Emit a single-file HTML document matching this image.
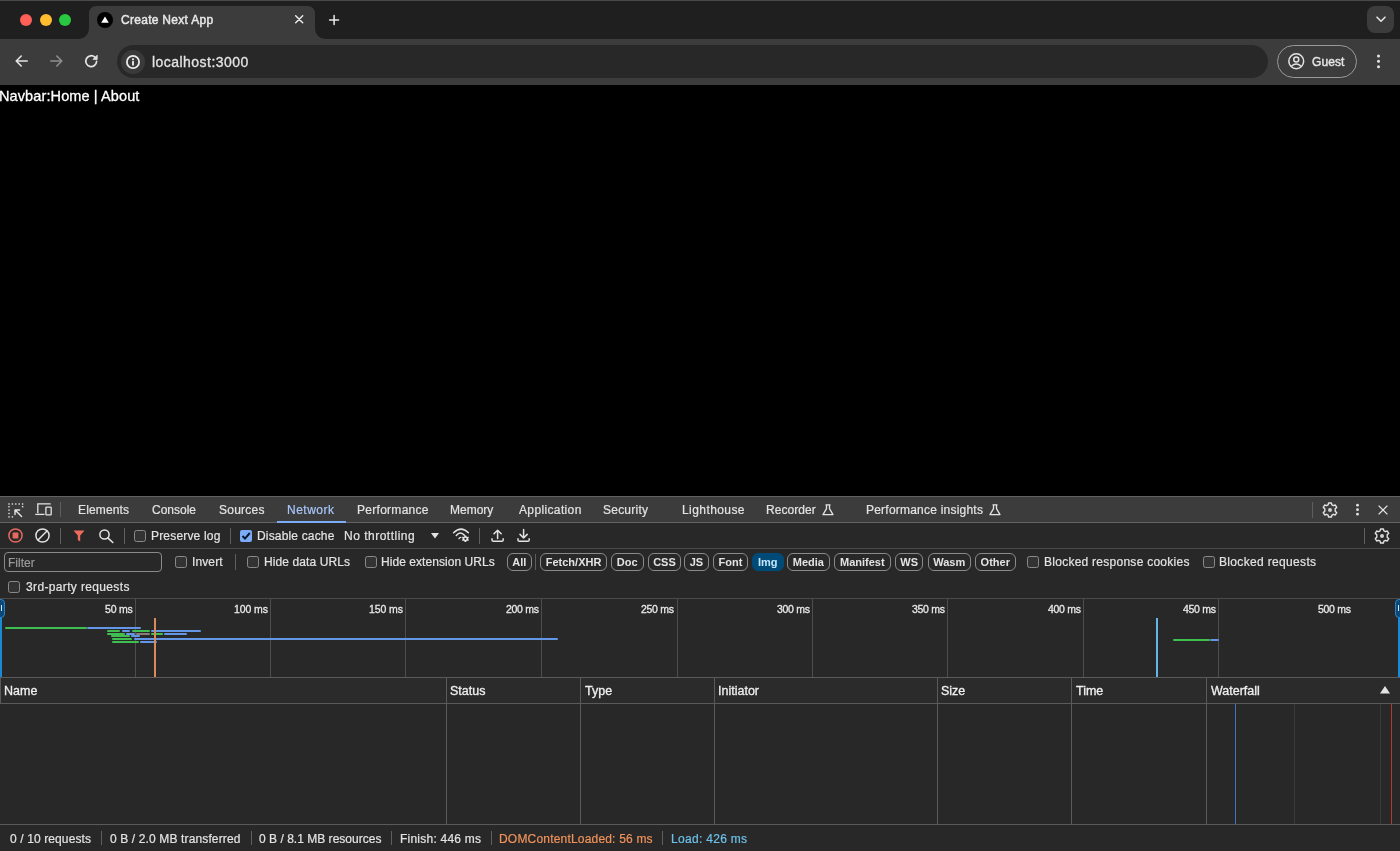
<!DOCTYPE html>
<html><head><meta charset="utf-8">
<style>
*{margin:0;padding:0;box-sizing:border-box}
html,body{width:1400px;height:851px;overflow:hidden;background:#000;font-family:"Liberation Sans",sans-serif;}
.a{position:absolute}
.t{white-space:nowrap;will-change:transform}
svg{overflow:visible}
</style></head><body>
<div class="a" style="left:0px;top:0px;width:1400px;height:39px;background:#1f1f1f"></div>
<div class="a" style="left:0px;top:0px;width:1400px;height:1px;background:#4a4a4a"></div>
<svg class="a" style="left:77px;top:5px" width="250" height="35" viewBox="0 0 250 35"><path d="M0 34 Q12 34 12 22 L12 9 Q12 1 20 1 L230 1 Q238 1 238 9 L238 22 Q238 34 250 34 Z" fill="#3c3c3c"/></svg>
<div class="a" style="left:0px;top:39px;width:1400px;height:46px;background:#3c3c3c"></div>
<div class="a" style="left:117px;top:45px;width:1151px;height:33px;background:#282828;border-radius:16.5px"></div>
<div class="a" style="left:19.8px;top:13.8px;width:12.4px;height:12.4px;background:#fe5f57;border-radius:50%"></div>
<div class="a" style="left:39.5px;top:13.8px;width:12.4px;height:12.4px;background:#febc2e;border-radius:50%"></div>
<div class="a" style="left:59.0px;top:13.8px;width:12.4px;height:12.4px;background:#28c840;border-radius:50%"></div>
<div class="a" style="left:97px;top:11.5px;width:16px;height:16px;background:#000;border-radius:50%"></div>
<svg class="a" style="left:97px;top:11.5px;" width="16" height="16" viewBox="0 0 16 16"><path d="M8 4.6 L11.8 10.8 L4.2 10.8 Z" fill="#fff"/></svg>
<div class="a t" id="t0" style="top:13.54px;font-size:12px;line-height:12px;color:#e8e8e8;font-weight:normal;letter-spacing:0.286px;-webkit-text-stroke:0.45px #e8e8e8;left:121.0px;">Create Next App</div>
<svg class="a" style="left:295.3px;top:15.3px;" width="8.4" height="8.4" viewBox="0 0 8.4 8.4"><path d="M0.7 0.7 L7.7 7.7 M7.7 0.7 L0.7 7.7" stroke="#ececec" stroke-width="1.5" stroke-linecap="round"/></svg>
<svg class="a" style="left:329.2px;top:14.6px;" width="10.2" height="10.2" viewBox="0 0 10.2 10.2"><path d="M5.1 0.6 V9.6 M0.6 5.1 H9.6" stroke="#ececec" stroke-width="1.5" stroke-linecap="round"/></svg>
<div class="a" style="left:1367px;top:6px;width:27px;height:27px;background:#3c3c3c;border-radius:8px"></div>
<svg class="a" style="left:1375.8px;top:16.2px;" width="10" height="7" viewBox="0 0 10 7"><path d="M1 1.2 L5 5.2 L9 1.2" stroke="#e3e3e3" stroke-width="1.6" fill="none" stroke-linecap="round" stroke-linejoin="round"/></svg>
<svg class="a" style="left:15.4px;top:55.4px;" width="13" height="12" viewBox="0 0 13 12"><path d="M12.2 6 H1.2 M6.2 1 L1.2 6 L6.2 11" stroke="#e3e3e3" stroke-width="1.6" fill="none" stroke-linecap="round" stroke-linejoin="round"/></svg>
<svg class="a" style="left:50.2px;top:55.4px;" width="13" height="12" viewBox="0 0 13 12"><path d="M0.8 6 H11.8 M6.8 1 L11.8 6 L6.8 11" stroke="#8f8f8f" stroke-width="1.6" fill="none" stroke-linecap="round" stroke-linejoin="round"/></svg>
<svg class="a" style="left:84px;top:53.6px;" width="15" height="14" viewBox="0 0 15 14"><path d="M12.6 7.3 A5.4 5.4 0 1 1 10.9 3.2" stroke="#e3e3e3" stroke-width="1.7" fill="none" stroke-linecap="round"/><path d="M13.2 1.2 L13.2 5.4 L9 5.4 Z" fill="#e3e3e3" stroke="#e3e3e3" stroke-width="0.8" stroke-linejoin="round"/></svg>
<div class="a" style="left:121px;top:50px;width:23.5px;height:23.5px;background:#3a3a3a;border-radius:50%"></div>
<svg class="a" style="left:125.8px;top:54.8px;" width="14" height="14" viewBox="0 0 14 14"><circle cx="7" cy="7" r="6.1" stroke="#ececec" stroke-width="1.8" fill="none"/><circle cx="7" cy="4.3" r="1.1" fill="#ececec"/><rect x="6.05" y="6.1" width="1.9" height="4.4" fill="#ececec"/></svg>
<div class="a t" id="t1" style="top:54.75px;font-size:14px;line-height:14px;color:#e3e3e3;font-weight:normal;letter-spacing:0.462px;-webkit-text-stroke:0.3px #e3e3e3;left:152.0px;">localhost:3000</div>
<div class="a" style="left:1276.5px;top:45px;width:80.5px;height:33px;border:1.3px solid #9a9a9a;border-radius:16.5px"></div>
<svg class="a" style="left:1287.5px;top:53.2px;" width="16.5" height="16.5" viewBox="0 0 16.5 16.5"><circle cx="8.25" cy="8.25" r="7.4" stroke="#e3e3e3" stroke-width="1.5" fill="none"/><circle cx="8.25" cy="6.4" r="2.5" stroke="#e3e3e3" stroke-width="1.5" fill="none"/><path d="M3.4 13.2 Q8.25 8.8 13.1 13.2" stroke="#e3e3e3" stroke-width="1.5" fill="none"/></svg>
<div class="a t" id="t2" style="top:55.84px;font-size:12px;line-height:12px;color:#e6e6e6;font-weight:normal;letter-spacing:0.075px;-webkit-text-stroke:0.4px #e6e6e6;left:1311.5px;">Guest</div>
<svg class="a" style="left:1376px;top:53px;" width="5" height="16" viewBox="0 0 5 16"><circle cx="2.5" cy="3" r="1.5" fill="#e6e6e6"/><circle cx="2.5" cy="8.3" r="1.5" fill="#e6e6e6"/><circle cx="2.5" cy="13.8" r="1.5" fill="#e6e6e6"/></svg>
<div class="a" style="left:0px;top:85px;width:1400px;height:411px;background:#000"></div>
<div class="a t" id="t3" style="top:89.13px;font-size:14.5px;line-height:14.5px;color:#ffffff;font-weight:normal;letter-spacing:0.111px;-webkit-text-stroke:0.3px #ffffff;left:-1.0px;">Navbar:Home | About</div>
<div class="a" style="left:0px;top:496px;width:1400px;height:355px;background:#282828"></div>
<div class="a" style="left:0px;top:496px;width:1400px;height:1px;background:#626262"></div>
<div class="a" style="left:0px;top:497px;width:1400px;height:25px;background:#3c3c3c"></div>
<div class="a" style="left:0px;top:522px;width:1400px;height:1px;background:#626262"></div>
<div class="a" style="left:0px;top:548px;width:1400px;height:1px;background:#4a4a4a"></div>
<svg class="a" style="left:8.3px;top:502.6px;" width="16" height="15" viewBox="0 0 16 15"><rect x="0.30000000000000004" y="0.3" width="1.4" height="1.4" fill="#e3e3e3"/><rect x="3.7" y="0.3" width="1.4" height="1.4" fill="#e3e3e3"/><rect x="7.1" y="0.3" width="1.4" height="1.4" fill="#e3e3e3"/><rect x="10.5" y="0.3" width="1.4" height="1.4" fill="#e3e3e3"/><rect x="13.9" y="0.3" width="1.4" height="1.4" fill="#e3e3e3"/><rect x="0.3" y="3.0" width="1.4" height="1.4" fill="#e3e3e3"/><rect x="0.3" y="6.3999999999999995" width="1.4" height="1.4" fill="#e3e3e3"/><rect x="0.3" y="9.8" width="1.4" height="1.4" fill="#e3e3e3"/><rect x="0.3" y="13.200000000000001" width="1.4" height="1.4" fill="#e3e3e3"/><rect x="3.7" y="13.2" width="1.4" height="1.4" fill="#e3e3e3"/><rect x="13.9" y="3" width="1.4" height="1.4" fill="#e3e3e3"/><path d="M7 7 L13.6 13.6 M7 7 H11.6 M7 7 V11.6" stroke="#e3e3e3" stroke-width="1.4" fill="none" stroke-linecap="round"/></svg>
<svg class="a" style="left:34.5px;top:503.3px;" width="17" height="13" viewBox="0 0 17 13"><path d="M2.8 10.2 V0.8 H15.7" stroke="#e3e3e3" stroke-width="1.3" fill="none"/><path d="M0.3 11.4 H9.5" stroke="#e3e3e3" stroke-width="1.3"/><rect x="10.9" y="4.2" width="5.3" height="7.6" rx="0.6" stroke="#e3e3e3" stroke-width="1.3" fill="none"/></svg>
<div class="a" style="left:60px;top:502px;width:1px;height:15px;background:#5e5e5e"></div>
<div class="a t" id="t4" style="top:503.64px;font-size:12px;line-height:12px;color:#e3e3e3;font-weight:normal;letter-spacing:0.143px;-webkit-text-stroke:0.2px #e3e3e3;left:77.99999999999997px;">Elements</div>
<div class="a t" id="t5" style="top:503.64px;font-size:12px;line-height:12px;color:#e3e3e3;font-weight:normal;-webkit-text-stroke:0.2px #e3e3e3;left:152.0px;">Console</div>
<div class="a t" id="t6" style="top:503.64px;font-size:12px;line-height:12px;color:#e3e3e3;font-weight:normal;letter-spacing:0.233px;-webkit-text-stroke:0.2px #e3e3e3;left:219.0px;">Sources</div>
<div class="a t" id="t7" style="top:503.64px;font-size:12px;line-height:12px;color:#a8c7fa;font-weight:normal;letter-spacing:0.500px;-webkit-text-stroke:0.2px #a8c7fa;left:287.0px;">Network</div>
<div class="a t" id="t8" style="top:503.64px;font-size:12px;line-height:12px;color:#e3e3e3;font-weight:normal;letter-spacing:0.280px;-webkit-text-stroke:0.2px #e3e3e3;left:357.0000000000001px;">Performance</div>
<div class="a t" id="t9" style="top:503.64px;font-size:12px;line-height:12px;color:#e3e3e3;font-weight:normal;-webkit-text-stroke:0.2px #e3e3e3;left:450.0px;">Memory</div>
<div class="a t" id="t10" style="top:503.64px;font-size:12px;line-height:12px;color:#e3e3e3;font-weight:normal;letter-spacing:0.360px;-webkit-text-stroke:0.2px #e3e3e3;left:519.0px;">Application</div>
<div class="a t" id="t11" style="top:503.64px;font-size:12px;line-height:12px;color:#e3e3e3;font-weight:normal;letter-spacing:0.228px;-webkit-text-stroke:0.2px #e3e3e3;left:603.0000000000001px;">Security</div>
<div class="a t" id="t12" style="top:503.64px;font-size:12px;line-height:12px;color:#e3e3e3;font-weight:normal;letter-spacing:0.422px;-webkit-text-stroke:0.2px #e3e3e3;left:681.9999999999998px;">Lighthouse</div>
<div class="a t" id="t13" style="top:503.64px;font-size:12px;line-height:12px;color:#e3e3e3;font-weight:normal;letter-spacing:0.056px;-webkit-text-stroke:0.2px #e3e3e3;left:765.4999999999999px;">Recorder</div>
<div class="a t" id="t14" style="top:503.64px;font-size:12px;line-height:12px;color:#e3e3e3;font-weight:normal;letter-spacing:0.220px;-webkit-text-stroke:0.2px #e3e3e3;left:866.0px;">Performance insights</div>
<div class="a" style="left:277px;top:521px;width:69px;height:2px;background:#7cacf8"></div>
<svg class="a" style="left:821.5px;top:504px;" width="12" height="12" viewBox="0 0 12 12"><path d="M3.5 0.8 H8.5 M4.5 0.8 V4.6 L1 10.6 H11 L7.5 4.6 V0.8" stroke="#e3e3e3" stroke-width="1.3" fill="none" stroke-linejoin="round"/></svg>
<svg class="a" style="left:988.5px;top:504px;" width="12" height="12" viewBox="0 0 12 12"><path d="M3.5 0.8 H8.5 M4.5 0.8 V4.6 L1 10.6 H11 L7.5 4.6 V0.8" stroke="#e3e3e3" stroke-width="1.3" fill="none" stroke-linejoin="round"/></svg>
<div class="a" style="left:1311.5px;top:502px;width:1px;height:16px;background:#5e5e5e"></div>
<svg class="a" style="left:1322px;top:501.5px;" width="16" height="16" viewBox="0 0 16 16"><g transform="translate(8,8)"><path d="M-1.4 -7 L1.4 -7 L1.9 -5.1 L3.4 -4.3 L5.3 -5 L6.7 -2.6 L5.2 -1.3 L5.2 1.3 L6.7 2.6 L5.3 5 L3.4 4.3 L1.9 5.1 L1.4 7 L-1.4 7 L-1.9 5.1 L-3.4 4.3 L-5.3 5 L-6.7 2.6 L-5.2 1.3 L-5.2 -1.3 L-6.7 -2.6 L-5.3 -5 L-3.4 -4.3 L-1.9 -5.1 Z" stroke="#e3e3e3" stroke-width="1.4" fill="none" stroke-linejoin="round"/><circle r="2" fill="#cfcfcf"/></g></svg>
<svg class="a" style="left:1354.7px;top:502px;" width="5" height="15" viewBox="0 0 5 15"><circle cx="2.5" cy="3.2" r="1.4" fill="#e3e3e3"/><circle cx="2.5" cy="7.7" r="1.4" fill="#e3e3e3"/><circle cx="2.5" cy="12.2" r="1.4" fill="#e3e3e3"/></svg>
<svg class="a" style="left:1377.5px;top:504.8px;" width="10" height="10" viewBox="0 0 10 10"><path d="M0.6 0.6 L9.4 9.4 M9.4 0.6 L0.6 9.4" stroke="#e3e3e3" stroke-width="1.3"/></svg>
<svg class="a" style="left:8px;top:527.8px;" width="15" height="15" viewBox="0 0 15 15"><circle cx="7.5" cy="7.5" r="6.6" stroke="#e46a5e" stroke-width="1.5" fill="none"/><rect x="4.6" y="4.6" width="5.8" height="5.8" rx="0.6" fill="#e46a5e"/></svg>
<svg class="a" style="left:35.2px;top:527.8px;" width="15" height="15" viewBox="0 0 15 15"><circle cx="7.5" cy="7.5" r="6.6" stroke="#e3e3e3" stroke-width="1.5" fill="none"/><path d="M12.2 2.8 L2.8 12.2" stroke="#e3e3e3" stroke-width="1.5"/></svg>
<div class="a" style="left:60px;top:528px;width:1px;height:16px;background:#5e5e5e"></div>
<svg class="a" style="left:72.5px;top:530px;" width="12" height="12" viewBox="0 0 12 12"><path d="M0.5 0.5 H11.5 L7.2 5.5 V11.5 L4.8 10 V5.5 Z" fill="#ee6b5e"/></svg>
<svg class="a" style="left:98.5px;top:528.8px;" width="15" height="14" viewBox="0 0 15 14"><circle cx="5.5" cy="5.5" r="4.6" stroke="#e3e3e3" stroke-width="1.5" fill="none"/><path d="M8.8 8.8 L13.8 13.5" stroke="#e3e3e3" stroke-width="1.6" stroke-linecap="round"/></svg>
<div class="a" style="left:123.5px;top:528px;width:1px;height:16px;background:#5e5e5e"></div>
<div class="a" style="left:134px;top:530px;width:12px;height:12px;border:1px solid #8a8a8a;border-radius:2.5px;background:#333"></div>
<div class="a t" id="t15" style="top:530.14px;font-size:12px;line-height:12px;color:#e3e3e3;font-weight:normal;letter-spacing:0.182px;-webkit-text-stroke:0.2px #e3e3e3;left:151.0px;">Preserve log</div>
<div class="a" style="left:229.5px;top:528px;width:1px;height:16px;background:#5e5e5e"></div>
<div class="a" style="left:240px;top:530px;width:12px;height:12px;background:#7cacf8;border-radius:2px"></div>
<svg class="a" style="left:240px;top:530px;" width="12" height="12" viewBox="0 0 12 12"><path d="M2.5 6 L5 8.6 L9.8 3" stroke="#0a1830" stroke-width="2" fill="none"/></svg>
<div class="a t" id="t16" style="top:530.14px;font-size:12px;line-height:12px;color:#e3e3e3;font-weight:normal;letter-spacing:0.167px;-webkit-text-stroke:0.2px #e3e3e3;left:256.5px;">Disable cache</div>
<div class="a t" id="t17" style="top:530.14px;font-size:12px;line-height:12px;color:#e3e3e3;font-weight:normal;letter-spacing:0.500px;-webkit-text-stroke:0.2px #e3e3e3;left:344.0px;">No throttling</div>
<svg class="a" style="left:430.5px;top:533px;" width="8" height="6" viewBox="0 0 8 6"><path d="M0 0 H8 L4 5.5 Z" fill="#e3e3e3"/></svg>
<svg class="a" style="left:452px;top:528px;" width="18" height="14" viewBox="0 0 18 14"><path d="M1.6 4.7 Q9 -2.5 16.4 4.7" stroke="#e3e3e3" stroke-width="1.5" fill="none" stroke-linecap="round"/><path d="M4.3 7.5 Q8.3 2.5 12.4 7.2" stroke="#e3e3e3" stroke-width="1.5" fill="none" stroke-linecap="round"/><path d="M7 10.6 Q7.6 9.6 8.8 9.4" stroke="#e3e3e3" stroke-width="1.4" fill="none" stroke-linecap="round"/><g transform="translate(13.4,10.8)"><path d="M-0.8 -3.2 H0.8 L1.1 -2.3 L2 -1.9 L2.8 -2.3 L3.5 -0.9 L2.7 -0.4 V0.4 L3.5 0.9 L2.8 2.3 L2 1.9 L1.1 2.3 L0.8 3.2 H-0.8 L-1.1 2.3 L-2 1.9 L-2.8 2.3 L-3.5 0.9 L-2.7 0.4 V-0.4 L-3.5 -0.9 L-2.8 -2.3 L-2 -1.9 L-1.1 -2.3 Z" fill="#e3e3e3"/><circle r="1.1" fill="#282828"/></g></svg>
<div class="a" style="left:478.5px;top:528px;width:1px;height:16px;background:#5e5e5e"></div>
<svg class="a" style="left:490.5px;top:528.5px;" width="13.2" height="13.5" viewBox="0 0 13.2 13.5"><path d="M6.6 1.2 V9.6 M3 4.8 L6.6 1.2 L10.2 4.8" stroke="#e3e3e3" stroke-width="1.5" fill="none" stroke-linejoin="round" stroke-linecap="round"/><path d="M1 9.2 V10.9 Q1 12.3 2.4 12.3 H10.8 Q12.2 12.3 12.2 10.9 V9.2" stroke="#e3e3e3" stroke-width="1.5" fill="none"/></svg>
<svg class="a" style="left:517.3px;top:528.5px;" width="13.2" height="13.5" viewBox="0 0 13.2 13.5"><path d="M6.6 0.6 V9 M3 5.4 L6.6 9 L10.2 5.4" stroke="#e3e3e3" stroke-width="1.5" fill="none" stroke-linejoin="round" stroke-linecap="round"/><path d="M1 9.2 V10.9 Q1 12.3 2.4 12.3 H10.8 Q12.2 12.3 12.2 10.9 V9.2" stroke="#e3e3e3" stroke-width="1.5" fill="none"/></svg>
<div class="a" style="left:1364px;top:528px;width:1px;height:16px;background:#5e5e5e"></div>
<svg class="a" style="left:1374.3px;top:527.5px;" width="16" height="16" viewBox="0 0 16 16"><g transform="translate(8,8)"><path d="M-1.4 -7 L1.4 -7 L1.9 -5.1 L3.4 -4.3 L5.3 -5 L6.7 -2.6 L5.2 -1.3 L5.2 1.3 L6.7 2.6 L5.3 5 L3.4 4.3 L1.9 5.1 L1.4 7 L-1.4 7 L-1.9 5.1 L-3.4 4.3 L-5.3 5 L-6.7 2.6 L-5.2 1.3 L-5.2 -1.3 L-6.7 -2.6 L-5.3 -5 L-3.4 -4.3 L-1.9 -5.1 Z" stroke="#e3e3e3" stroke-width="1.4" fill="none" stroke-linejoin="round"/><circle r="2" fill="#cfcfcf"/></g></svg>
<div class="a" style="left:4px;top:552px;width:158px;height:20px;border:1px solid #8a8a8a;border-radius:4px;background:#282828"></div>
<div class="a t" id="t18" style="top:557.04px;font-size:12px;line-height:12px;color:#999999;font-weight:normal;-webkit-text-stroke:0.2px #999999;left:7.5px;">Filter</div>
<div class="a" style="left:175px;top:556px;width:12px;height:12px;border:1px solid #8a8a8a;border-radius:2.5px;background:#333"></div>
<div class="a t" id="t19" style="top:556.24px;font-size:12px;line-height:12px;color:#e3e3e3;font-weight:normal;letter-spacing:0.120px;-webkit-text-stroke:0.2px #e3e3e3;left:191.99999999999997px;">Invert</div>
<div class="a" style="left:235px;top:554px;width:1px;height:16px;background:#5e5e5e"></div>
<div class="a" style="left:246.8px;top:556px;width:12px;height:12px;border:1px solid #8a8a8a;border-radius:2.5px;background:#333"></div>
<div class="a t" id="t20" style="top:556.24px;font-size:12px;line-height:12px;color:#e3e3e3;font-weight:normal;letter-spacing:0.107px;-webkit-text-stroke:0.2px #e3e3e3;left:264.0px;">Hide data URLs</div>
<div class="a" style="left:364.6px;top:556px;width:12px;height:12px;border:1px solid #8a8a8a;border-radius:2.5px;background:#333"></div>
<div class="a t" id="t21" style="top:556.24px;font-size:12px;line-height:12px;color:#e3e3e3;font-weight:normal;letter-spacing:0.056px;-webkit-text-stroke:0.2px #e3e3e3;left:381.0px;">Hide extension URLs</div>
<div class="a t" style="left:506.5px;top:553px;width:24.5px;height:18px;border:1px solid #8a8a8a;color:#e3e3e3;border-radius:6px;font-size:11px;font-weight:bold;line-height:16px;text-align:center">All</div>
<div class="a t" style="left:540px;top:553px;width:67.1px;height:18px;border:1px solid #8a8a8a;color:#e3e3e3;border-radius:6px;font-size:11px;font-weight:bold;line-height:16px;text-align:center">Fetch/XHR</div>
<div class="a t" style="left:611px;top:553px;width:32.5px;height:18px;border:1px solid #8a8a8a;color:#e3e3e3;border-radius:6px;font-size:11px;font-weight:bold;line-height:16px;text-align:center">Doc</div>
<div class="a t" style="left:647.6px;top:553px;width:32.9px;height:18px;border:1px solid #8a8a8a;color:#e3e3e3;border-radius:6px;font-size:11px;font-weight:bold;line-height:16px;text-align:center">CSS</div>
<div class="a t" style="left:684.2px;top:553px;width:24.8px;height:18px;border:1px solid #8a8a8a;color:#e3e3e3;border-radius:6px;font-size:11px;font-weight:bold;line-height:16px;text-align:center">JS</div>
<div class="a t" style="left:713px;top:553px;width:34.9px;height:18px;border:1px solid #8a8a8a;color:#e3e3e3;border-radius:6px;font-size:11px;font-weight:bold;line-height:16px;text-align:center">Font</div>
<div class="a t" style="left:752px;top:553px;width:31.5px;height:18px;background:#004a77;border:1px solid #004a77;color:#c2e7ff;border-radius:6px;font-size:11px;font-weight:bold;line-height:16px;text-align:center">Img</div>
<div class="a t" style="left:787.2px;top:553px;width:42.8px;height:18px;border:1px solid #8a8a8a;color:#e3e3e3;border-radius:6px;font-size:11px;font-weight:bold;line-height:16px;text-align:center">Media</div>
<div class="a t" style="left:834.2px;top:553px;width:56.6px;height:18px;border:1px solid #8a8a8a;color:#e3e3e3;border-radius:6px;font-size:11px;font-weight:bold;line-height:16px;text-align:center">Manifest</div>
<div class="a t" style="left:895.3px;top:553px;width:28.4px;height:18px;border:1px solid #8a8a8a;color:#e3e3e3;border-radius:6px;font-size:11px;font-weight:bold;line-height:16px;text-align:center">WS</div>
<div class="a t" style="left:928px;top:553px;width:42.5px;height:18px;border:1px solid #8a8a8a;color:#e3e3e3;border-radius:6px;font-size:11px;font-weight:bold;line-height:16px;text-align:center">Wasm</div>
<div class="a t" style="left:975px;top:553px;width:40.5px;height:18px;border:1px solid #8a8a8a;color:#e3e3e3;border-radius:6px;font-size:11px;font-weight:bold;line-height:16px;text-align:center">Other</div>
<div class="a" style="left:535.3px;top:554px;width:1px;height:16px;background:#5e5e5e"></div>
<div class="a" style="left:1027px;top:556px;width:12px;height:12px;border:1px solid #8a8a8a;border-radius:2.5px;background:#333"></div>
<div class="a t" id="t22" style="top:556.24px;font-size:12px;line-height:12px;color:#e3e3e3;font-weight:normal;letter-spacing:0.261px;-webkit-text-stroke:0.2px #e3e3e3;left:1044.0px;">Blocked response cookies</div>
<div class="a" style="left:1202.5px;top:556px;width:12px;height:12px;border:1px solid #8a8a8a;border-radius:2.5px;background:#333"></div>
<div class="a t" id="t23" style="top:556.24px;font-size:12px;line-height:12px;color:#e3e3e3;font-weight:normal;letter-spacing:0.333px;-webkit-text-stroke:0.2px #e3e3e3;left:1219.0px;">Blocked requests</div>
<div class="a" style="left:8px;top:580.5px;width:12px;height:12px;border:1px solid #8a8a8a;border-radius:2.5px;background:#333"></div>
<div class="a t" id="t24" style="top:580.54px;font-size:12px;line-height:12px;color:#e3e3e3;font-weight:normal;letter-spacing:0.353px;-webkit-text-stroke:0.2px #e3e3e3;left:26.0px;">3rd-party requests</div>
<div class="a" style="left:0px;top:598px;width:1400px;height:1px;background:#4a4a4a"></div>
<div class="a" style="left:135px;top:599px;width:1px;height:78px;background:#4d4d4d"></div>
<div class="a" style="left:270px;top:599px;width:1px;height:78px;background:#4d4d4d"></div>
<div class="a" style="left:405px;top:599px;width:1px;height:78px;background:#4d4d4d"></div>
<div class="a" style="left:541px;top:599px;width:1px;height:78px;background:#4d4d4d"></div>
<div class="a" style="left:676.5px;top:599px;width:1px;height:78px;background:#4d4d4d"></div>
<div class="a" style="left:812px;top:599px;width:1px;height:78px;background:#4d4d4d"></div>
<div class="a" style="left:947px;top:599px;width:1px;height:78px;background:#4d4d4d"></div>
<div class="a" style="left:1083px;top:599px;width:1px;height:78px;background:#4d4d4d"></div>
<div class="a" style="left:1218px;top:599px;width:1px;height:78px;background:#4d4d4d"></div>
<div class="a t" id="t25" style="top:603.81px;font-size:10.5px;line-height:10.5px;color:#e8e8e8;font-weight:normal;letter-spacing:-0.200px;-webkit-text-stroke:0.3px #e8e8e8;right:1267.5px;">50 ms</div>
<div class="a t" id="t26" style="top:603.81px;font-size:10.5px;line-height:10.5px;color:#e8e8e8;font-weight:normal;letter-spacing:-0.080px;-webkit-text-stroke:0.3px #e8e8e8;right:1132.5px;">100 ms</div>
<div class="a t" id="t27" style="top:603.81px;font-size:10.5px;line-height:10.5px;color:#e8e8e8;font-weight:normal;letter-spacing:-0.080px;-webkit-text-stroke:0.3px #e8e8e8;right:997.5px;">150 ms</div>
<div class="a t" id="t28" style="top:603.81px;font-size:10.5px;line-height:10.5px;color:#e8e8e8;font-weight:normal;letter-spacing:-0.280px;-webkit-text-stroke:0.3px #e8e8e8;right:861.5px;">200 ms</div>
<div class="a t" id="t29" style="top:603.81px;font-size:10.5px;line-height:10.5px;color:#e8e8e8;font-weight:normal;letter-spacing:-0.280px;-webkit-text-stroke:0.3px #e8e8e8;right:726.0px;">250 ms</div>
<div class="a t" id="t30" style="top:603.81px;font-size:10.5px;line-height:10.5px;color:#e8e8e8;font-weight:normal;letter-spacing:-0.280px;-webkit-text-stroke:0.3px #e8e8e8;right:590.5px;">300 ms</div>
<div class="a t" id="t31" style="top:603.81px;font-size:10.5px;line-height:10.5px;color:#e8e8e8;font-weight:normal;letter-spacing:-0.280px;-webkit-text-stroke:0.3px #e8e8e8;right:455.5px;">350 ms</div>
<div class="a t" id="t32" style="top:603.81px;font-size:10.5px;line-height:10.5px;color:#e8e8e8;font-weight:normal;letter-spacing:-0.280px;-webkit-text-stroke:0.3px #e8e8e8;right:319.5px;">400 ms</div>
<div class="a t" id="t33" style="top:603.81px;font-size:10.5px;line-height:10.5px;color:#e8e8e8;font-weight:normal;letter-spacing:-0.280px;-webkit-text-stroke:0.3px #e8e8e8;right:184.5px;">450 ms</div>
<div class="a t" id="t34" style="top:603.81px;font-size:10.5px;line-height:10.5px;color:#e8e8e8;font-weight:normal;letter-spacing:-0.280px;-webkit-text-stroke:0.3px #e8e8e8;right:49.0px;">500 ms</div>
<div class="a" style="left:0px;top:617px;width:2.2px;height:60px;background:#1a8ad4"></div>
<div class="a" style="left:-2px;top:599px;width:6.5px;height:18.5px;background:#0b4a78;border:1px solid #2f7fc0;border-radius:0 4px 4px 0"></div>
<div class="a" style="left:1.2px;top:605px;width:1.2px;height:6px;background:#cfe6ff"></div>
<div class="a" style="left:1397.6px;top:617px;width:2.4px;height:60px;background:#1a8ad4"></div>
<div class="a" style="left:1394.5px;top:599px;width:7.5px;height:18.5px;background:#0b4a78;border:1px solid #2f7fc0;border-radius:4px 0 0 4px"></div>
<div class="a" style="left:1397.8px;top:605px;width:1.2px;height:6px;background:#cfe6ff"></div>
<div class="a" style="left:4.5px;top:627px;width:82.0px;height:2px;background:#3fbf50;border-radius:1px"></div>
<div class="a" style="left:87px;top:627px;width:54.30000000000001px;height:2px;background:#6396e6;border-radius:1px"></div>
<div class="a" style="left:107px;top:630px;width:13.400000000000006px;height:2px;background:#3fbf50;border-radius:1px"></div>
<div class="a" style="left:121.9px;top:630px;width:8.099999999999994px;height:2px;background:#6396e6;border-radius:1px"></div>
<div class="a" style="left:131.6px;top:630px;width:18.400000000000006px;height:2px;background:#3fbf50;border-radius:1px"></div>
<div class="a" style="left:151px;top:630px;width:50px;height:2px;background:#6396e6;border-radius:1px"></div>
<div class="a" style="left:107px;top:633px;width:18px;height:2px;background:#3fbf50;border-radius:1px"></div>
<div class="a" style="left:126px;top:633px;width:9px;height:2px;background:#6396e6;border-radius:1px"></div>
<div class="a" style="left:136px;top:633px;width:14px;height:2px;background:#8a7d74;border-radius:1px"></div>
<div class="a" style="left:151px;top:633px;width:12px;height:2px;background:#3fbf50;border-radius:1px"></div>
<div class="a" style="left:164px;top:633px;width:23px;height:2px;background:#6396e6;border-radius:1px"></div>
<div class="a" style="left:110.6px;top:635px;width:19.400000000000006px;height:2px;background:#3fbf50;border-radius:1px"></div>
<div class="a" style="left:131px;top:635px;width:9px;height:2px;background:#6396e6;border-radius:1px"></div>
<div class="a" style="left:112px;top:638px;width:20px;height:2px;background:#3fbf50;border-radius:1px"></div>
<div class="a" style="left:134px;top:638px;width:424px;height:2px;background:#6396e6;border-radius:1px"></div>
<div class="a" style="left:112px;top:641px;width:27px;height:2px;background:#3fbf50;border-radius:1px"></div>
<div class="a" style="left:140px;top:641px;width:17px;height:2px;background:#6396e6;border-radius:1px"></div>
<div class="a" style="left:154.3px;top:618px;width:1.8px;height:59px;background:#d98a58"></div>
<div class="a" style="left:1156.2px;top:618px;width:1.5px;height:59px;background:#62b6e8"></div>
<div class="a" style="left:1172.5px;top:639px;width:37.5px;height:2px;background:#3fbf50;border-radius:1px"></div>
<div class="a" style="left:1210px;top:639px;width:9px;height:2px;background:#6396e6;border-radius:1px"></div>
<div class="a" style="left:0px;top:677px;width:1400px;height:1px;background:#5a5a5a"></div>
<div class="a" style="left:0px;top:678px;width:1400px;height:25px;background:#2b2b2b"></div>
<div class="a" style="left:0px;top:703px;width:1400px;height:1px;background:#5a5a5a"></div>
<div class="a" style="left:446px;top:678px;width:1px;height:146px;background:#5a5a5a"></div>
<div class="a" style="left:580px;top:678px;width:1px;height:146px;background:#5a5a5a"></div>
<div class="a" style="left:714px;top:678px;width:1px;height:146px;background:#5a5a5a"></div>
<div class="a" style="left:937px;top:678px;width:1px;height:146px;background:#5a5a5a"></div>
<div class="a" style="left:1071px;top:678px;width:1px;height:146px;background:#5a5a5a"></div>
<div class="a" style="left:1206px;top:678px;width:1px;height:146px;background:#5a5a5a"></div>
<div class="a" style="left:0px;top:678px;width:1px;height:25px;background:#5a5a5a"></div>
<div class="a t" id="t35" style="top:685.22px;font-size:12.5px;line-height:12.5px;color:#f0f0f0;font-weight:normal;-webkit-text-stroke:0.3px #f0f0f0;left:4.0px;">Name</div>
<div class="a t" id="t36" style="top:685.22px;font-size:12.5px;line-height:12.5px;color:#f0f0f0;font-weight:normal;-webkit-text-stroke:0.3px #f0f0f0;left:450.0px;">Status</div>
<div class="a t" id="t37" style="top:685.22px;font-size:12.5px;line-height:12.5px;color:#f0f0f0;font-weight:normal;-webkit-text-stroke:0.3px #f0f0f0;left:585.0px;">Type</div>
<div class="a t" id="t38" style="top:685.22px;font-size:12.5px;line-height:12.5px;color:#f0f0f0;font-weight:normal;-webkit-text-stroke:0.3px #f0f0f0;left:718.0px;">Initiator</div>
<div class="a t" id="t39" style="top:685.22px;font-size:12.5px;line-height:12.5px;color:#f0f0f0;font-weight:normal;-webkit-text-stroke:0.3px #f0f0f0;left:941.0px;">Size</div>
<div class="a t" id="t40" style="top:685.22px;font-size:12.5px;line-height:12.5px;color:#f0f0f0;font-weight:normal;-webkit-text-stroke:0.3px #f0f0f0;left:1076.0px;">Time</div>
<div class="a t" id="t41" style="top:685.22px;font-size:12.5px;line-height:12.5px;color:#f0f0f0;font-weight:normal;-webkit-text-stroke:0.3px #f0f0f0;left:1211.0px;">Waterfall</div>
<svg class="a" style="left:1380px;top:686px;" width="10" height="8" viewBox="0 0 10 8"><path d="M0 7.5 L5 0 L10 7.5 Z" fill="#e3e3e3"/></svg>
<div class="a" style="left:1234.5px;top:704px;width:1.5px;height:120px;background:#3f74c4"></div>
<div class="a" style="left:1293.5px;top:704px;width:1px;height:120px;background:#3a3a3a"></div>
<div class="a" style="left:1380px;top:704px;width:1px;height:120px;background:#3a3a3a"></div>
<div class="a" style="left:1390.5px;top:704px;width:1.5px;height:120px;background:#b33a2a"></div>
<div class="a" style="left:0px;top:824px;width:1400px;height:1px;background:#5a5a5a"></div>
<div class="a t" id="t42" style="top:832.84px;font-size:12px;line-height:12px;color:#e3e3e3;font-weight:normal;letter-spacing:0.115px;-webkit-text-stroke:0.2px #e3e3e3;left:10.0px;">0 / 10 requests</div>
<div class="a t" id="t43" style="top:832.84px;font-size:12px;line-height:12px;color:#e3e3e3;font-weight:normal;letter-spacing:0.130px;-webkit-text-stroke:0.2px #e3e3e3;left:110.0px;">0 B / 2.0 MB transferred</div>
<div class="a t" id="t44" style="top:832.84px;font-size:12px;line-height:12px;color:#e3e3e3;font-weight:normal;letter-spacing:0.020px;-webkit-text-stroke:0.2px #e3e3e3;left:258.9999999999999px;">0 B / 8.1 MB resources</div>
<div class="a t" id="t45" style="top:832.84px;font-size:12px;line-height:12px;color:#e3e3e3;font-weight:normal;letter-spacing:0.231px;-webkit-text-stroke:0.2px #e3e3e3;left:400.0px;">Finish: 446 ms</div>
<div class="a t" id="t46" style="top:832.84px;font-size:12px;line-height:12px;color:#f0925a;font-weight:normal;letter-spacing:0.191px;-webkit-text-stroke:0.2px #f0925a;left:499.0px;">DOMContentLoaded: 56 ms</div>
<div class="a t" id="t47" style="top:832.84px;font-size:12px;line-height:12px;color:#6cc0ea;font-weight:normal;letter-spacing:0.310px;-webkit-text-stroke:0.2px #6cc0ea;left:670.9999999999998px;">Load: 426 ms</div>
<div class="a" style="left:100.6px;top:831px;width:1px;height:14px;background:#5e5e5e"></div>
<div class="a" style="left:250.6px;top:831px;width:1px;height:14px;background:#5e5e5e"></div>
<div class="a" style="left:391.4px;top:831px;width:1px;height:14px;background:#5e5e5e"></div>
<div class="a" style="left:491.3px;top:831px;width:1px;height:14px;background:#5e5e5e"></div>
<div class="a" style="left:662.3px;top:831px;width:1px;height:14px;background:#5e5e5e"></div>
</body></html>
